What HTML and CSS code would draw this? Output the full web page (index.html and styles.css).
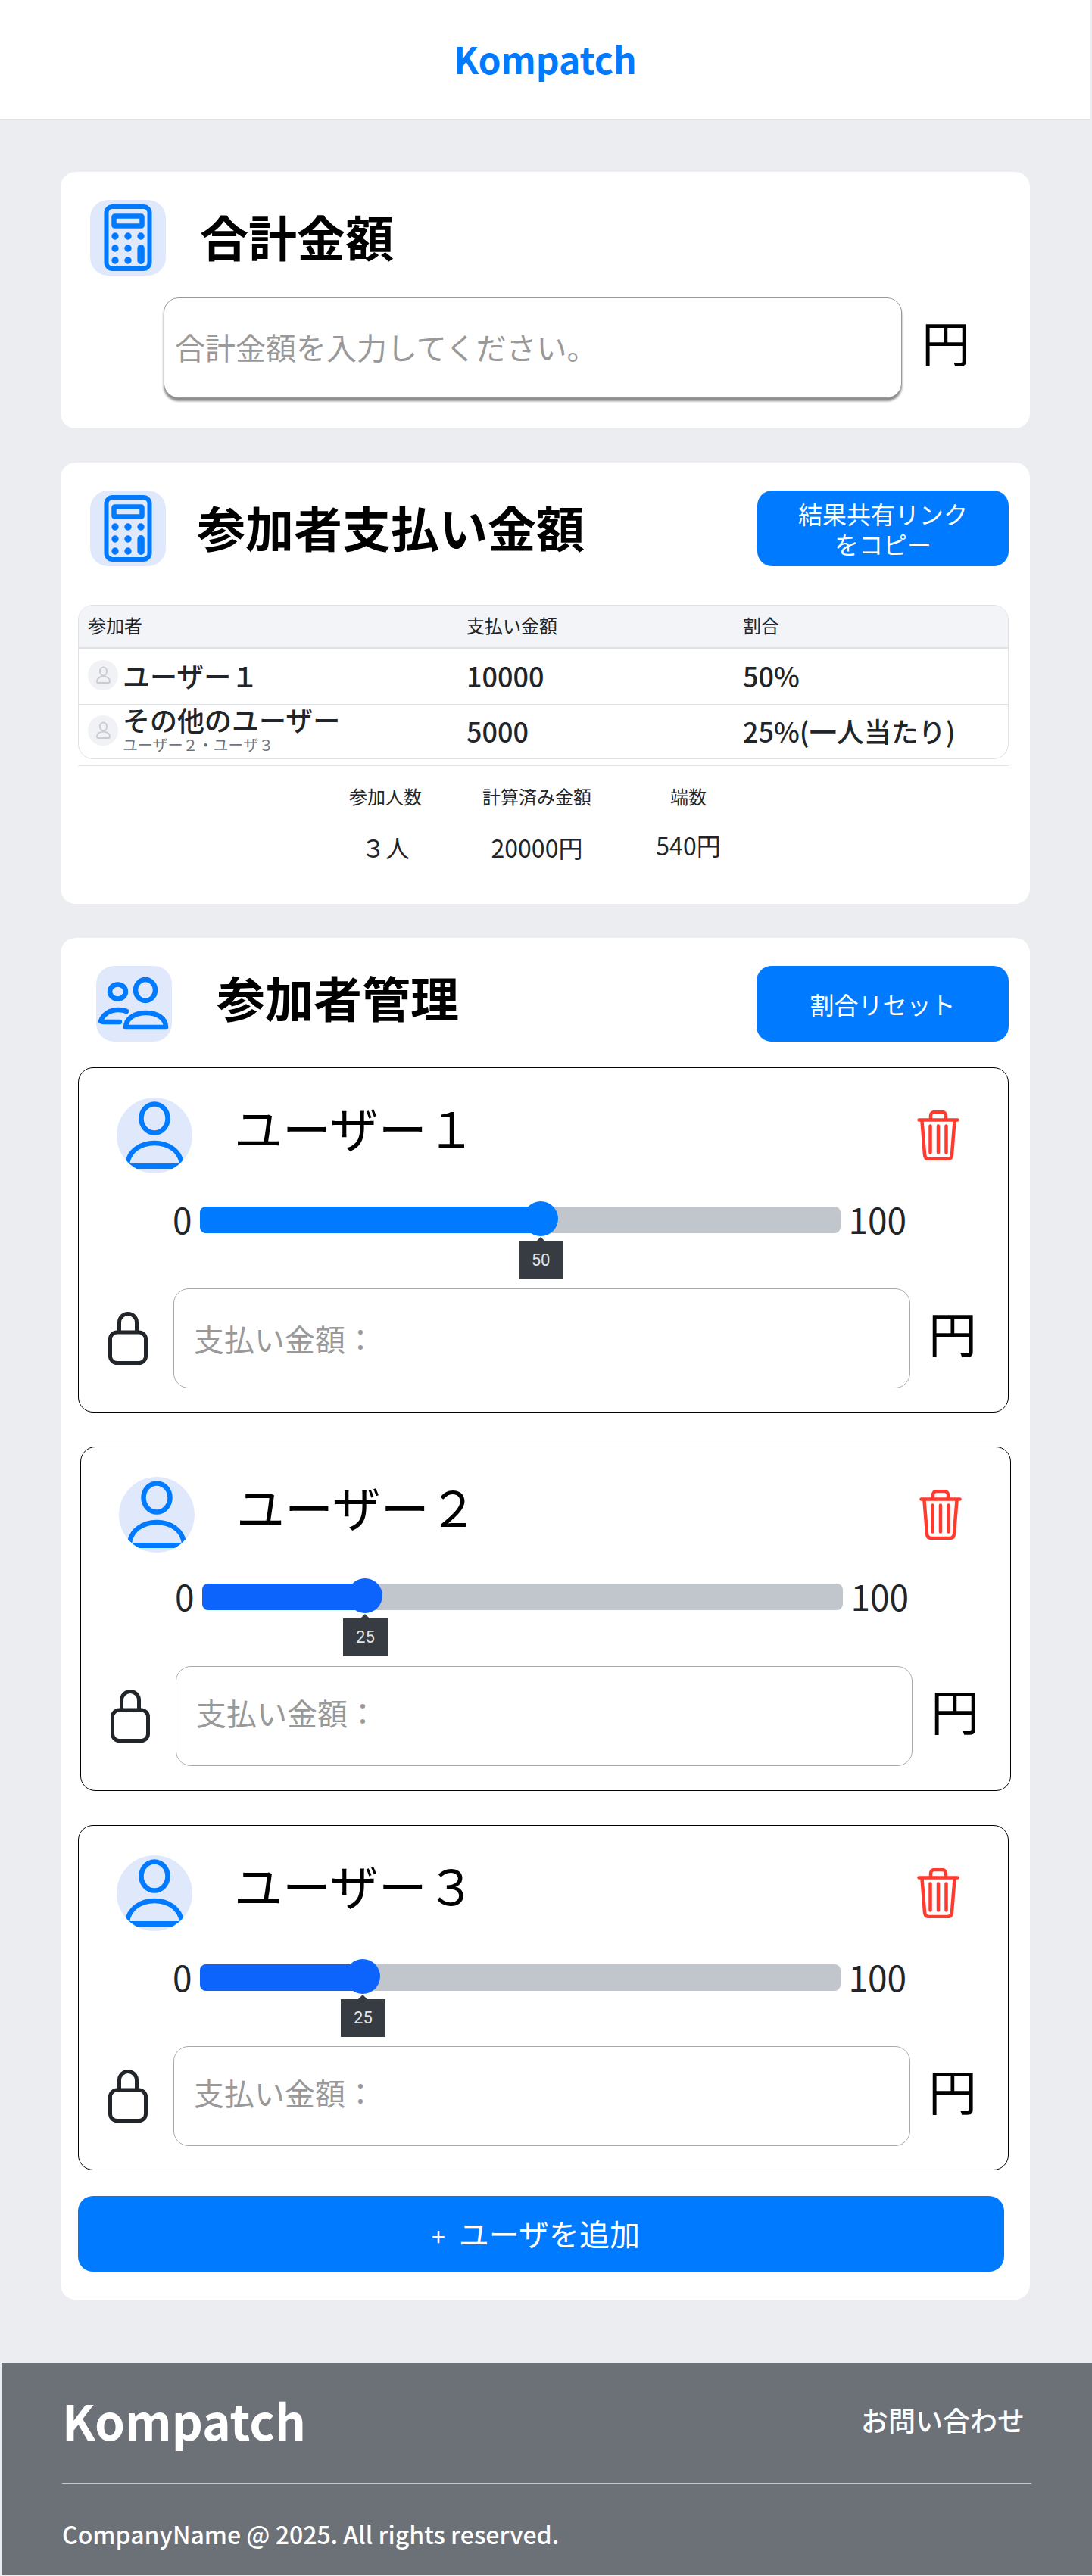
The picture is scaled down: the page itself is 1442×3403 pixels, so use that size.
FILE: index.html
```html
<!DOCTYPE html>
<html lang="ja">
<head>
    <meta charset="utf-8">
    <title>Kompatch</title>
    <link rel="stylesheet" href="styles.css">
</head>
<body>
<!--頭部-->
<header class="site-header">
    <h1 class="site-name">Kompatch</h1>
</header>
<main class="site-main">
    <!--合計金額-->
    <section class="card total-card">
        <div class="card-head">
            <div class="head-icon">
                <svg viewBox="0 0 100 100" width="100" height="100"><rect x="21.5" y="9" width="57" height="82" rx="8" fill="none" stroke="#007bff" stroke-width="6"/><rect x="31.5" y="21.5" width="37" height="13" rx="1" fill="none" stroke="#007bff" stroke-width="6.5"/><g fill="#007bff"><circle cx="33" cy="48" r="4.7"/><circle cx="50" cy="48" r="4.7"/><circle cx="67" cy="48" r="4.7"/><circle cx="33" cy="64" r="4.7"/><circle cx="50" cy="64" r="4.7"/><circle cx="33" cy="80" r="4.7"/><circle cx="50" cy="80" r="4.7"/><rect x="62.4" y="59" width="9.4" height="26" rx="4.7"/></g></svg>
            </div>
            <h2 class="card-title total-title">合計金額</h2>
        </div>
        <div class="total-row">
            <input class="total-input" type="text" placeholder="合計金額を入力してください。">
            <span class="yen">円</span>
        </div>
    </section>

    <!--参加者支払い金額-->
    <section class="card result-card">
        <div class="card-head">
            <div class="head-icon">
                <svg viewBox="0 0 100 100" width="100" height="100"><rect x="21.5" y="9" width="57" height="82" rx="8" fill="none" stroke="#007bff" stroke-width="6"/><rect x="31.5" y="21.5" width="37" height="13" rx="1" fill="none" stroke="#007bff" stroke-width="6.5"/><g fill="#007bff"><circle cx="33" cy="48" r="4.7"/><circle cx="50" cy="48" r="4.7"/><circle cx="67" cy="48" r="4.7"/><circle cx="33" cy="64" r="4.7"/><circle cx="50" cy="64" r="4.7"/><circle cx="33" cy="80" r="4.7"/><circle cx="50" cy="80" r="4.7"/><rect x="62.4" y="59" width="9.4" height="26" rx="4.7"/></g></svg>
            </div>
            <h2 class="card-title result-title">参加者支払い金額</h2>
            <button class="btn-main share-btn" type="button">結果共有リンク<br>をコピー</button>
        </div>
        <div class="table-wrap">
            <table class="result-table">
                <thead>
                    <tr><th class="col-name">参加者</th><th class="col-pay">支払い金額</th><th>割合</th></tr>
                </thead>
                <tbody>
                    <tr class="row-one">
                        <td>
                            <div class="person">
                                <span class="mini-avatar"><svg viewBox="0 0 40 40" width="40" height="40"><ellipse cx="20.5" cy="15" rx="4.6" ry="5.4" fill="none" stroke="#c9cdd3" stroke-width="2"/><path d="M14 30c-1.500 0-2-1-2-2 0-4 4-6.500 8.500-6.500S29 24 29 28c0 1-.6 2-2 2z" fill="none" stroke="#c9cdd3" stroke-width="2"/></svg></span>
                                <span class="person-name">ユーザー１</span>
                            </div>
                        </td>
                        <td>10000</td>
                        <td>50%</td>
                    </tr>
                    <tr class="row-two">
                        <td>
                            <div class="person">
                                <span class="mini-avatar"><svg viewBox="0 0 40 40" width="40" height="40"><ellipse cx="20.5" cy="15" rx="4.6" ry="5.4" fill="none" stroke="#c9cdd3" stroke-width="2"/><path d="M14 30c-1.500 0-2-1-2-2 0-4 4-6.500 8.500-6.500S29 24 29 28c0 1-.6 2-2 2z" fill="none" stroke="#c9cdd3" stroke-width="2"/></svg></span>
                                <div class="person-text">
                                    <div class="person-name">その他のユーザー</div>
                                    <div class="person-sub">ユーザー２・ユーザ３</div>
                                </div>
                            </div>
                        </td>
                        <td>5000</td>
                        <td>25%(一人当たり)</td>
                    </tr>
                </tbody>
            </table>
        </div>
        <hr class="stats-line">
        <div class="stats">
            <div class="stat">
                <div class="stat-label">参加人数</div>
                <div class="stat-value">３人</div>
            </div>
            <div class="stat">
                <div class="stat-label">計算済み金額</div>
                <div class="stat-value">20000円</div>
            </div>
            <div class="stat">
                <div class="stat-label">端数</div>
                <div class="stat-value stat-value-up">540円</div>
            </div>
        </div>
    </section>

    <!--参加者管理-->
    <section class="card member-card">
        <div class="card-head">
            <div class="head-icon member-icon">
                <svg viewBox="0 0 100 100" width="100" height="100"><g fill="none" stroke="#007bff" stroke-width="6.500" stroke-linecap="round" stroke-linejoin="round"><ellipse cx="65" cy="32" rx="13" ry="14"/><ellipse cx="28.500" cy="34" rx="10.500" ry="9.500"/><path d="M39 81c0-11 11-19 27-19s26 8 26 19z"/><path d="M40 60c-3-1.500-7-2-11-2C18 58 9 64 6 73c2 1 4 1 6 1h19"/></g></svg>
            </div>
            <h2 class="card-title member-title">参加者管理</h2>
            <button class="btn-main reset-btn" type="button">割合リセット</button>
        </div>

        <div class="user-card">
            <div class="user-head">
                <div class="user-avatar">
                    <svg viewBox="0 0 100 100" width="100" height="100"><g fill="none" stroke="#007bff" stroke-width="6.500"><ellipse cx="50" cy="27.500" rx="17.500" ry="19"/><path d="M14 88C16 70 32 60 50 60s34 10 36 28"/></g><rect x="0" y="87" width="100" height="7" fill="#007bff"/></svg>
                </div>
                <span class="user-name">ユーザー１</span>
                <svg class="trash" viewBox="0 0 56 66" width="56" height="66"><g fill="none" stroke="#ff3b30" stroke-width="4.500" stroke-linecap="round" stroke-linejoin="round"><path d="M2.500 12.500h51"/><path d="M18 11V7c0-3 2-5 5-5h10c3 0 5 2 5 5v4"/><path d="M6.500 14l3.500 44c.3 4 2.500 6 6 6h24c3.500 0 5.700-2 6-6l3.500-44"/><path d="M17.500 20.500v35M28 20.500v35M38.500 20.500v35"/></g></svg>
            </div>
            <div class="slider-row">
                <span class="slider-end">0</span>
                <div class="slider">
                    <div class="slider-fill" style="width: 53.2%"></div>
                    <div class="slider-thumb" style="left: 53.2%">
                        <span class="slider-tip">50</span>
                    </div>
                </div>
                <span class="slider-end">100</span>
            </div>
            <div class="pay-row">
                <svg class="lock" viewBox="0 0 52 70" width="52" height="70"><g fill="none" stroke="#212529" stroke-width="5"><rect x="2.500" y="27" width="47" height="40.500" rx="9"/><path d="M14.500 27V14a11.500 11.500 0 0 1 23 0v13"/></g></svg>
                <input class="pay-input" type="text" placeholder="支払い金額：">
                <span class="yen pay-yen">円</span>
            </div>
        </div>

        <div class="user-card user-card-shift">
            <div class="user-head">
                <div class="user-avatar">
                    <svg viewBox="0 0 100 100" width="100" height="100"><g fill="none" stroke="#007bff" stroke-width="6.500"><ellipse cx="50" cy="27.500" rx="17.500" ry="19"/><path d="M14 88C16 70 32 60 50 60s34 10 36 28"/></g><rect x="0" y="87" width="100" height="7" fill="#007bff"/></svg>
                </div>
                <span class="user-name">ユーザー２</span>
                <svg class="trash" viewBox="0 0 56 66" width="56" height="66"><g fill="none" stroke="#ff3b30" stroke-width="4.500" stroke-linecap="round" stroke-linejoin="round"><path d="M2.500 12.500h51"/><path d="M18 11V7c0-3 2-5 5-5h10c3 0 5 2 5 5v4"/><path d="M6.500 14l3.500 44c.3 4 2.500 6 6 6h24c3.500 0 5.700-2 6-6l3.500-44"/><path d="M17.500 20.500v35M28 20.500v35M38.500 20.500v35"/></g></svg>
            </div>
            <div class="slider-row">
                <span class="slider-end">0</span>
                <div class="slider">
                    <div class="slider-fill fill-low" style="width: 25.5%"></div>
                    <div class="slider-thumb fill-low" style="left: 25.5%">
                        <span class="slider-tip">25</span>
                    </div>
                </div>
                <span class="slider-end">100</span>
            </div>
            <div class="pay-row">
                <svg class="lock" viewBox="0 0 52 70" width="52" height="70"><g fill="none" stroke="#212529" stroke-width="5"><rect x="2.500" y="27" width="47" height="40.500" rx="9"/><path d="M14.500 27V14a11.500 11.500 0 0 1 23 0v13"/></g></svg>
                <input class="pay-input pay-input-up" type="text" placeholder="支払い金額：">
                <span class="yen pay-yen">円</span>
            </div>
        </div>

        <div class="user-card">
            <div class="user-head">
                <div class="user-avatar">
                    <svg viewBox="0 0 100 100" width="100" height="100"><g fill="none" stroke="#007bff" stroke-width="6.500"><ellipse cx="50" cy="27.500" rx="17.500" ry="19"/><path d="M14 88C16 70 32 60 50 60s34 10 36 28"/></g><rect x="0" y="87" width="100" height="7" fill="#007bff"/></svg>
                </div>
                <span class="user-name">ユーザー３</span>
                <svg class="trash" viewBox="0 0 56 66" width="56" height="66"><g fill="none" stroke="#ff3b30" stroke-width="4.500" stroke-linecap="round" stroke-linejoin="round"><path d="M2.500 12.500h51"/><path d="M18 11V7c0-3 2-5 5-5h10c3 0 5 2 5 5v4"/><path d="M6.500 14l3.500 44c.3 4 2.500 6 6 6h24c3.500 0 5.700-2 6-6l3.500-44"/><path d="M17.500 20.500v35M28 20.500v35M38.500 20.500v35"/></g></svg>
            </div>
            <div class="slider-row">
                <span class="slider-end">0</span>
                <div class="slider">
                    <div class="slider-fill fill-low" style="width: 25.5%"></div>
                    <div class="slider-thumb fill-low" style="left: 25.5%">
                        <span class="slider-tip">25</span>
                    </div>
                </div>
                <span class="slider-end">100</span>
            </div>
            <div class="pay-row">
                <svg class="lock" viewBox="0 0 52 70" width="52" height="70"><g fill="none" stroke="#212529" stroke-width="5"><rect x="2.500" y="27" width="47" height="40.500" rx="9"/><path d="M14.500 27V14a11.500 11.500 0 0 1 23 0v13"/></g></svg>
                <input class="pay-input pay-input-up" type="text" placeholder="支払い金額：">
                <span class="yen pay-yen">円</span>
            </div>
        </div>

        <button class="btn-main add-btn" type="button"><span class="add-plus">+</span>ユーザを追加</button>
    </section>
</main>
<!--フッター-->
<footer class="site-footer">
    <div class="footer-top">
        <span class="footer-name">Kompatch</span>
        <a class="footer-link" href="#">お問い合わせ</a>
    </div>
    <p class="footer-copy">CompanyName @ 2025. All rights reserved.</p>
</footer>
</body>
</html>
```

FILE: styles.css
```css
body,p,h1,h2{margin: 0;}
body{
    background: #ebedf1;
    color: #212529;
    font-family: "Noto Sans CJK JP", "Noto Sans", sans-serif;
}
input,button{font-family: inherit;}
input::placeholder{color: #999;opacity: 1;}

/* header */
.site-header{
    height: 158px;
    margin-right: 2px;
    padding-bottom: 3px;
    box-sizing: border-box;
    background: #fff;
    border-bottom: 1px solid #e2e3e6;
    display: flex;
    align-items: center;
    justify-content: center;
}
.site-name{
    font-size: 48px;
    line-height: 60px;
    font-weight: 700;
    color: #007bff;
}

/* cards */
.site-main{
    padding: 69px 82px 83px 80px;
    display: flex;
    flex-direction: column;
    gap: 45px;
}
.card{
    background: #fff;
    border-radius: 20px;
    padding: 37px 28px 37px 23px;
}
.card-head{
    display: flex;
    align-items: center;
}
.head-icon{
    width: 100px;
    height: 100px;
    margin-left: 16px;
    background: #e0e9fc;
    border-radius: 24px;
    flex: none;
}
.head-icon svg{display: block;}
.member-icon{margin-left: 24px;}
.card-title{
    font-size: 64px;
    line-height: 80px;
    font-weight: 700;
    color: #000;
}
.total-title{margin-left: 45px;margin-bottom: 6px;}
.result-title{margin-left: 41px;margin-bottom: 6px;}
.member-title{margin-left: 59px;margin-bottom: 20px;}
.btn-main{
    border: none;
    background: #007bff;
    color: #fff;
    border-radius: 20px;
    font-size: 32px;
    line-height: 40px;
    padding: 0;
}
.share-btn{width: 332px;height: 100px;margin-left: auto;}
.reset-btn{width: 333px;height: 100px;margin-left: auto;}

/* total */
.total-card{padding-bottom: 40px;}
.total-row{
    display: flex;
    align-items: center;
    margin: 29px 0 0 113px;
}
.total-input{
    width: 975px;
    height: 133px;
    box-sizing: border-box;
    border: 1px solid #999;
    border-radius: 20px;
    box-shadow: 0 4px 3px rgba(0, 0, 0, .45);
    padding: 0 14px 4px;
    font-size: 40px;
    outline: none;
}
.yen{
    font-size: 64px;
    line-height: 80px;
    color: #000;
    margin-left: 26px;
    margin-bottom: 20px;
}

/* result table */
.table-wrap{
    margin-top: 51px;
    border: 1px solid #dee2e6;
    border-radius: 20px;
    overflow: hidden;
}
.result-table{
    width: 100%;
    border-collapse: separate;
    border-spacing: 0;
    table-layout: fixed;
}
.result-table th,.result-table td{box-sizing: border-box;}
.result-table th{
    height: 57px;
    padding: 0 12px 4px;
    background: #f3f4f8;
    border-bottom: 2px solid #dee2e6;
    font-size: 24px;
    font-weight: 400;
    text-align: left;
}
.result-table td{
    padding: 0 12px 3px;
    font-size: 36px;
    line-height: 44px;
    font-weight: 500;
}
.col-name{width: 500px;}
.col-pay{width: 365px;}
.row-one td{height: 74px;border-bottom: 1px solid #dee2e6;}
.row-two td{height: 71px;}
.person{display: flex;align-items: center;gap: 6px;}
.mini-avatar{
    width: 40px;
    height: 40px;
    background: #f0f2f6;
    border-radius: 50%;
    flex: none;
}
.mini-avatar svg{display: block;}
.person-text{margin-top: -6px;}
.person-sub{
    font-size: 20px;
    line-height: 24px;
    font-weight: 400;
    color: #6c757d;
}
.stats-line{
    margin: 8px 0 0;
    border: none;
    border-top: 1px solid #e3e5e8;
}
.stats{
    display: flex;
    padding: 22px 0 14px 306px;
}
.stat{width: 200px;text-align: center;}
.stat-label{font-size: 24px;line-height: 36px;}
.stat-value{font-size: 32px;line-height: 48px;margin-top: 25px;}
.stat-value-up{margin-top: 22px;}

/* users */
.user-card{
    margin-top: 45px;
    border: 1px solid #000;
    border-radius: 20px;
    padding: 39px 0 31px;
}
.card-head + .user-card{margin-top: 34px;}
.user-card-shift{margin-left: 3px;margin-right: -3px;}
.user-head{
    display: flex;
    align-items: center;
    padding: 0 64px 0 50px;
}
.user-avatar{
    width: 100px;
    height: 100px;
    background: #e0e9fc;
    border-radius: 50%;
    overflow: hidden;
    flex: none;
}
.user-avatar svg{display: block;}
.user-name{
    margin-left: 55px;
    margin-bottom: 24px;
    font-size: 64px;
    line-height: 74px;
    color: #000;
}
.trash{margin-left: auto;}

.slider-row{
    display: flex;
    align-items: center;
    gap: 10px;
    margin-top: 44px;
    padding: 0 134px 0 124px;
}
.slider-end{font-size: 46px;line-height: 32px;padding-bottom: 3px;}
.slider{
    position: relative;
    flex: 1;
    height: 35px;
    background: #c1c6cd;
    border-radius: 8px;
}
.slider-fill{
    height: 35px;
    background: #007bff;
    border-radius: 8px 0 0 8px;
}
.slider-thumb{
    position: absolute;
    top: -7px;
    width: 46px;
    height: 46px;
    margin-left: -23px;
    background: #007bff;
    border-radius: 50%;
}
.fill-low{background: #0d64fd;}
.slider-tip{
    position: absolute;
    top: 53px;
    left: -6.500px;
    width: 59px;
    height: 50px;
    background: #373b42;
    color: #e3e4e6;
    font-family: Roboto, sans-serif;
    font-size: 22px;
    line-height: 50px;
    text-align: center;
}
.slider-tip:before{
    content: '';
    position: absolute;
    top: -6px;
    left: 23.500px;
    border-left: 6px solid transparent;
    border-right: 6px solid transparent;
    border-bottom: 6px solid #373b42;
}
.pay-row{
    display: flex;
    align-items: center;
    margin-top: 73px;
    padding: 0 41px 0 39px;
}
.lock{flex: none;}
.pay-input{
    flex: 1;
    min-width: 0;
    height: 132px;
    box-sizing: border-box;
    margin-left: 34px;
    border: 1px solid #aaa;
    border-radius: 20px;
    padding: 0 26px;
    font-size: 40px;
    outline: none;
}
.pay-input-up{padding-bottom: 10px;}
.user-card-shift .slider-row{margin-top: 41px;}
.user-card-shift .pay-row{margin-top: 74px;}
.user-card-shift{padding-bottom: 32px;}
.pay-yen{margin-left: 24px;margin-bottom: 18px;}
.add-btn{
    width: 1223px;
    height: 100px;
    margin-top: 34px;
    padding-right: 14px;
    display: block;
    font-size: 40px;
    line-height: 50px;
}
.add-plus{font-size: 32px;margin-right: 18px;}

/* footer */
.site-footer{
    margin-left: 2px;
    height: 281px;
    box-sizing: border-box;
    background: #6c7178;
    color: #fff;
    padding: 37px 80px 0;
}
.footer-top{
    display: flex;
    align-items: center;
    justify-content: space-between;
    height: 76px;
    padding: 0 9px 46px 0;
    border-bottom: 1px solid #c3c6ca;
}
.footer-name{font-size: 64px;line-height: 76px;font-weight: 700;}
.footer-link{font-size: 36px;line-height: 54px;font-weight: 500;color: #fff;text-decoration: none;}
.footer-copy{
    margin-top: 39px;
    font-size: 32px;
    line-height: 54px;
    font-weight: 500;
}
```
